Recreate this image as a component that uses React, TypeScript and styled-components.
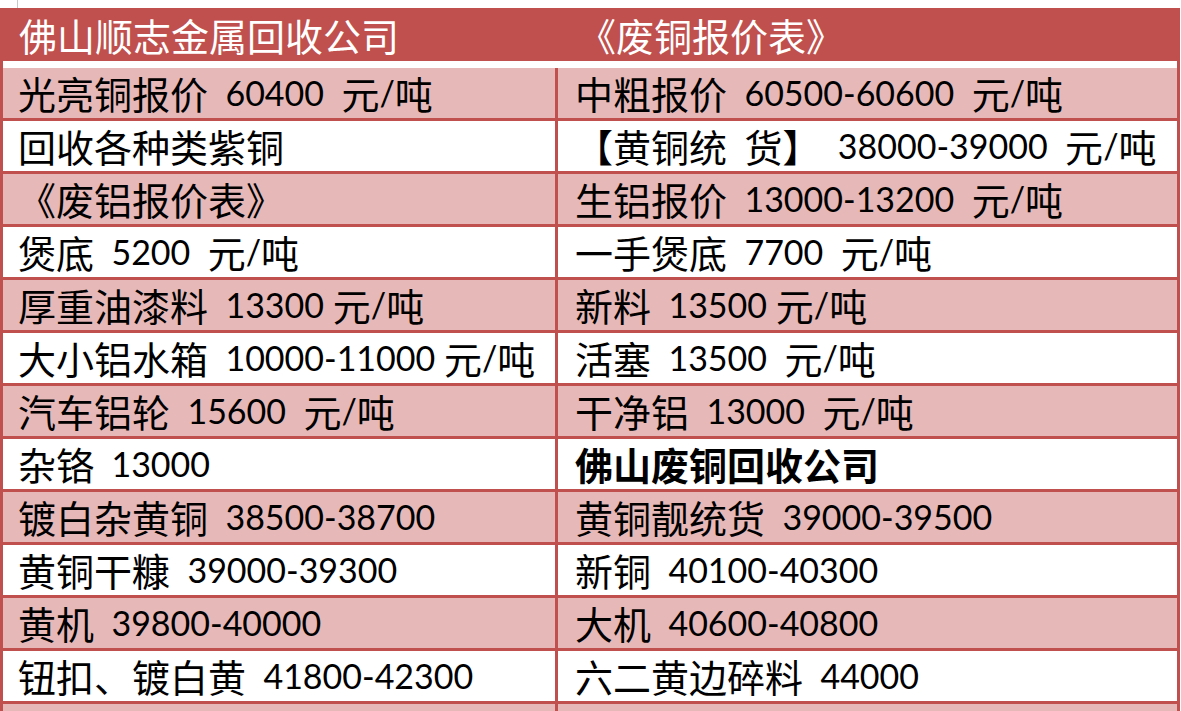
import React from 'react'
import styled, {createGlobalStyle} from 'styled-components'

const RED = '#C0504D'
const PINK = '#E6B8B7'

const GlobalStyle = createGlobalStyle`
  html, body {
    margin: 0;
    padding: 0;
    background: #fff;
  }
  body {
    font-family: "Noto Sans CJK SC", "Noto Sans", sans-serif;
  }
`

type Row = {
    left: string
    right: string
    rightBold?: boolean
}

const rows: Row[] = [
    {left: '光亮铜报价  60400  元/吨', right: '中粗报价  60500-60600  元/吨'},
    {left: '回收各种类紫铜', right: '【黄铜统  货】  38000-39000  元/吨'},
    {left: '《废铝报价表》', right: '生铝报价  13000-13200  元/吨'},
    {left: '煲底  5200  元/吨', right: '一手煲底  7700  元/吨'},
    {left: '厚重油漆料  13300 元/吨', right: '新料  13500 元/吨'},
    {left: '大小铝水箱  10000-11000 元/吨', right: '活塞  13500  元/吨'},
    {left: '汽车铝轮  15600  元/吨', right: '干净铝  13000  元/吨'},
    {left: '杂铬  13000', right: '佛山废铜回收公司', rightBold: true},
    {left: '镀白杂黄铜  38500-38700', right: '黄铜靓统货  39000-39500'},
    {left: '黄铜干糠  39000-39300', right: '新铜  40100-40300'},
    {left: '黄机  39800-40000', right: '大机  40600-40800'},
    {left: '钮扣、镀白黄  41800-42300', right: '六二黄边碎料  44000'},
    {left: '', right: ''},
]

// latin runs (digits, dashes, slashes, spaces) get the narrower latin face
const renderText = (text: string) =>
    text.split(/([\x20-\x7E]+)/).filter(Boolean).map((part, i) =>
        /^[\x20-\x7E]+$/.test(part) ? <Num key={i}>{part}</Num> : <React.Fragment key={i}>{part}</React.Fragment>
    )

const App = () => {
    return <Page>
        <GlobalStyle/>
        <TopStrip>
            <Tick/>
        </TopStrip>
        <Header>
            <HeaderCell>佛山顺志金属回收公司</HeaderCell>
            <HeaderCell $right>《废铜报价表》</HeaderCell>
        </Header>
        <Body>
            {rows.map((row, i) => <TableRow key={i} $pink={i % 2 === 0}>
                <Cell>{renderText(row.left)}</Cell>
                <Cell $right $bold={row.rightBold}>{renderText(row.right)}</Cell>
            </TableRow>)}
        </Body>
    </Page>
}
export default App


const Page = styled.div`
  width: 1181px;
  height: 711px;
  overflow: hidden;
  background: #fff;
`

const TopStrip = styled.div`
  height: 8px;
  padding-left: 17px;
  display: flex;
`

const Tick = styled.div`
  width: 1px;
  height: 100%;
  background: #c8c8c8;
`

const Header = styled.div`
  width: 1180px;
  height: 53px;
  background: ${RED};
  display: grid;
  grid-template-columns: 558px 1fr;
  align-items: center;
`

const HeaderCell = styled.div<{ $right?: boolean }>`
  padding-left: ${p => p.$right ? '20px' : '19px'};
  color: #fff;
  font-size: 38px;
  line-height: 1.2;
  white-space: pre;
`

const Body = styled.div`
  width: 1174px;
  border-left: 3px solid ${RED};
  border-right: 3px solid ${RED};
  padding-top: 7px;
`

const TableRow = styled.div<{ $pink: boolean }>`
  display: grid;
  grid-template-columns: 552px 1fr;
  height: 50px;
  border-bottom: 3px solid ${RED};
  background: ${p => p.$pink ? PINK : '#fff'};
`

const Cell = styled.div<{ $right?: boolean; $bold?: boolean }>`
  display: flex;
  align-items: center;
  min-width: 0;
  padding-left: ${p => p.$right ? '17px' : '15px'};
  border-left: ${p => p.$right ? `3px solid ${RED}` : 'none'};
  color: #000;
  font-size: 38px;
  font-weight: ${p => p.$bold ? 700 : 400};
  line-height: 1.2;
  white-space: pre;
`

const Num = styled.span`
  font-family: Lato, "Liberation Sans", sans-serif;
  font-size: 34px;
  font-weight: inherit;
`
